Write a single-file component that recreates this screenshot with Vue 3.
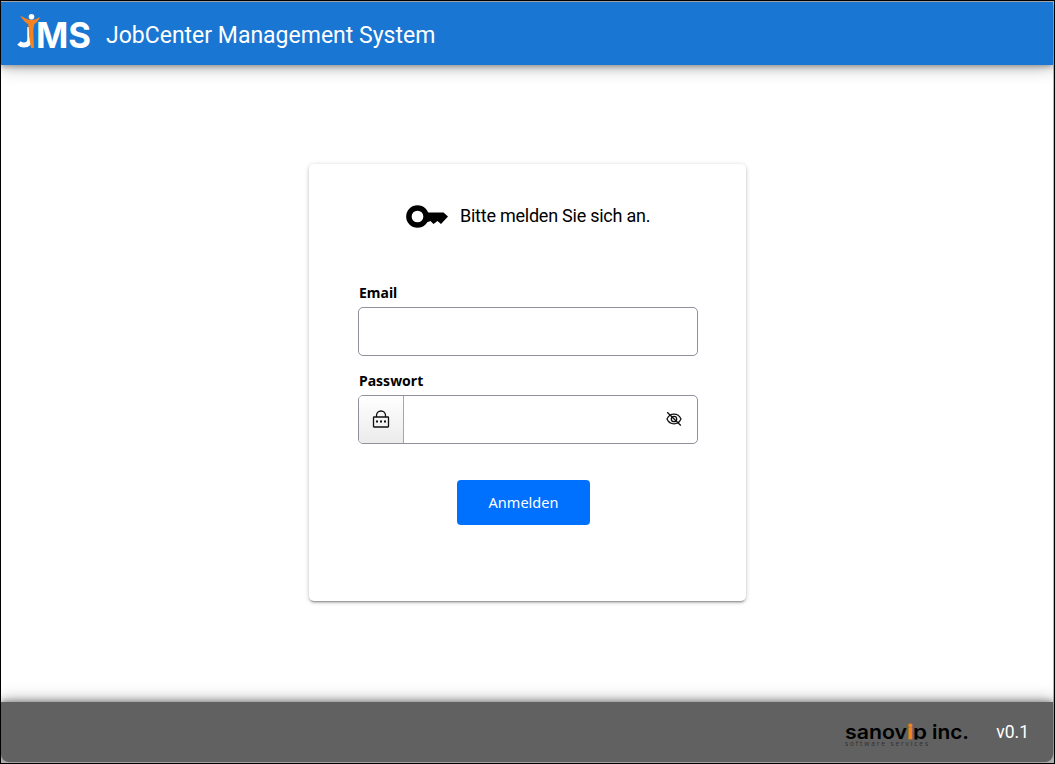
<template>
  <div class="window">
    <header class="toolbar">
      <svg class="logo" width="74" height="36" viewBox="0 0 74 36">
        <path class="logo-j" d="M12.800 13v12q0 6-5.800 6-3 0-5-2" />
        <text class="logo-text" x="19" y="33.500" textLength="55" lengthAdjust="spacingAndGlyphs">MS</text>
        <circle cx="14.5" cy="2.8" r="2.8" fill="#fff" />
        <path fill="#f58220" d="M3 1.500 10 5q4.500 2 9 0l4-2q-2 5-5.500 7-1.500 4-1 12l.5 12h-3L12 22q0-8-1-12Q7 8 3 1.500z" />
      </svg>
      <h1 class="title">JobCenter Management System</h1>
    </header>

    <main class="content">
      <form class="card" @submit.prevent>
        <div class="heading">
          <svg width="42" height="24" viewBox="0 0 42 24">
            <path d="M20 8.500H37.500L42 12.500 35 20 31.500 17 27.500 20 24.500 17 22 18H20z" />
            <circle class="key-ring" cx="11.500" cy="12.500" r="8.600" />
          </svg>
          <span class="heading-text">Bitte melden Sie sich an.</span>
        </div>

        <label class="label" for="email">Email</label>
        <div class="field">
          <input id="email" v-model="email" type="email" />
        </div>

        <label class="label" for="password">Passwort</label>
        <div class="field">
          <span class="prefix">
            <svg class="line-icon" width="18" height="20" viewBox="0 0 18 20">
              <path d="M4.500 8V6.500a4.500 4.500 0 0 1 9 0V8" />
              <rect x="1.500" y="8" width="15" height="10" rx=".5" />
              <path class="dots" d="M4 12.500h2M8 12.500h2M12 12.500h2" />
            </svg>
          </span>
          <input id="password" v-model="password" :type="visible ? 'text' : 'password'" />
          <button class="eye" type="button" aria-label="Passwort anzeigen" @click="visible = !visible">
            <svg class="line-icon" width="16" height="16" viewBox="0 0 16 16">
              <path d="M1 8q2.200-4.800 7-4.800T15 8q-2.200 4.800-7 4.800T1 8z" />
              <circle cx="8" cy="8" r="2.700" />
              <path v-if="!visible" d="M1.200 1.300 14.800 14.500" />
            </svg>
          </button>
        </div>

        <button class="submit" type="submit">Anmelden</button>
      </form>
    </main>

    <footer class="footer">
      <svg class="company" width="126" height="28" viewBox="0 0 126 28">
        <defs>
          <clipPath id="baseline"><rect x="0" y="0" width="126" height="19.500" /></clipPath>
        </defs>
        <g class="company-name" clip-path="url(#baseline)">
          <text x="0" y="19" textLength="62" lengthAdjust="spacingAndGlyphs">sanov</text>
          <text class="accent" x="62.500" y="19">i</text>
          <text x="68" y="19" textLength="14" lengthAdjust="spacingAndGlyphs">p</text>
          <text x="87" y="19" textLength="37" lengthAdjust="spacingAndGlyphs">inc.</text>
        </g>
        <text class="company-sub" x="0" y="26" textLength="83">software services</text>
      </svg>
      <span class="version">v0.1</span>
    </footer>
  </div>
</template>

<script setup>
import { ref } from 'vue'

const email = ref('')
const password = ref('')
const visible = ref(false)
</script>

<style>
body {
  margin: 0;
  background: #000;
}
</style>

<style scoped>
.window {
  box-sizing: border-box;
  width: 1053px;
  height: 762px;
  margin: 1px;
  padding: 1px 1px 1px 0;
  display: flex;
  flex-direction: column;
  overflow: hidden;
  background: #b8b8b8;
  font-family: Roboto, sans-serif;
}

.toolbar {
  z-index: 1;
  height: 63px;
  display: flex;
  align-items: center;
  flex-shrink: 0;
  background: #1976d2;
  box-shadow: 0 2px 4px -1px rgba(0, 0, 0, .2), 0 4px 5px rgba(0, 0, 0, .1), 0 2px 16px rgba(0, 0, 0, .3);
}

.logo {
  margin: -4px 15px 0 16px;
  overflow: visible;
}

.logo-j {
  fill: none;
  stroke: #fff;
  stroke-width: 5;
}

.logo-text {
  fill: #fff;
  font: 700 35.500px Inter, sans-serif;
}

.title {
  margin: 3px 0 0;
  color: #fff;
  font-size: 23px;
  font-weight: 400;
}

.content {
  flex: 1;
  background: #fff;
}

.card {
  box-sizing: border-box;
  width: 437px;
  height: 437px;
  margin: 99px 0 0 308px;
  padding: 40px 49px 0;
  display: flex;
  flex-direction: column;
  border-radius: 5px;
  background: #fff;
  box-shadow: 0 3px 1px -2px rgba(0, 0, 0, .2), 0 2px 2px rgba(0, 0, 0, .14), 0 1px 5px rgba(0, 0, 0, .2);
}

.heading {
  height: 24px;
  margin: 0 0 54px 48px;
  display: flex;
  align-items: center;
  gap: 12px;
  font-size: 18px;
  white-space: nowrap;
}

.heading-text {
  margin-top: -2px;
  letter-spacing: -.24px;
}

.key-ring {
  fill: none;
  stroke: #000;
  stroke-width: 5.500;
}

.label {
  height: 22px;
  margin: 0 0 3px 1px;
  font: 700 14px/22px "Noto Sans", sans-serif;
}

.field {
  box-sizing: border-box;
  width: 339.500px;
  height: 48.500px;
  margin-bottom: 14.500px;
  display: flex;
  align-items: center;
  overflow: hidden;
  border: 1px solid #8f8f9d;
  border-radius: 5px;
}

.field input {
  flex: 1;
  min-width: 0;
  height: 100%;
  padding: 0 12px;
  border: 0;
  outline: 0;
  background: none;
  font-size: 16px;
}

.prefix {
  width: 43.500px;
  height: 100%;
  display: flex;
  align-items: center;
  justify-content: center;
  border-right: 1px solid #a5a5ad;
  background: linear-gradient(#fff, #ebebeb);
}

.line-icon {
  fill: none;
  stroke: #111;
  stroke-width: 1.300;
}

.dots {
  stroke-width: 2;
}

.eye {
  margin-right: 15px;
  padding: 0;
  display: flex;
  border: 0;
  background: none;
}

.submit {
  width: 133px;
  height: 45px;
  margin: 22px 0 0 99px;
  padding: 0 0 2px;
  border: 0;
  border-radius: 4px;
  background: #0070ff;
  color: #fff;
  font: 400 14.500px "Noto Sans", sans-serif;
}

.footer {
  z-index: 1;
  height: 60px;
  flex-shrink: 0;
  display: flex;
  align-items: center;
  justify-content: flex-end;
  border-radius: 0 0 8px 8px;
  background: #616161;
  box-shadow: 0 -2px 4px -1px rgba(0, 0, 0, .2), 0 -4px 5px rgba(0, 0, 0, .1), 0 -2px 16px rgba(0, 0, 0, .3);
}

.company {
  margin: 4px 25px 0 0;
}

.company-name {
  font: 600 20px Inter, sans-serif;
}

.accent {
  fill: #f58220;
  stroke: #f58220;
  stroke-width: 1;
}

.company-sub {
  fill: #303030;
  font: 6.500px "Open Sans", sans-serif;
}

.version {
  margin: 0 24px 0 0;
  color: #fff;
  font-size: 17.500px;
}
</style>
